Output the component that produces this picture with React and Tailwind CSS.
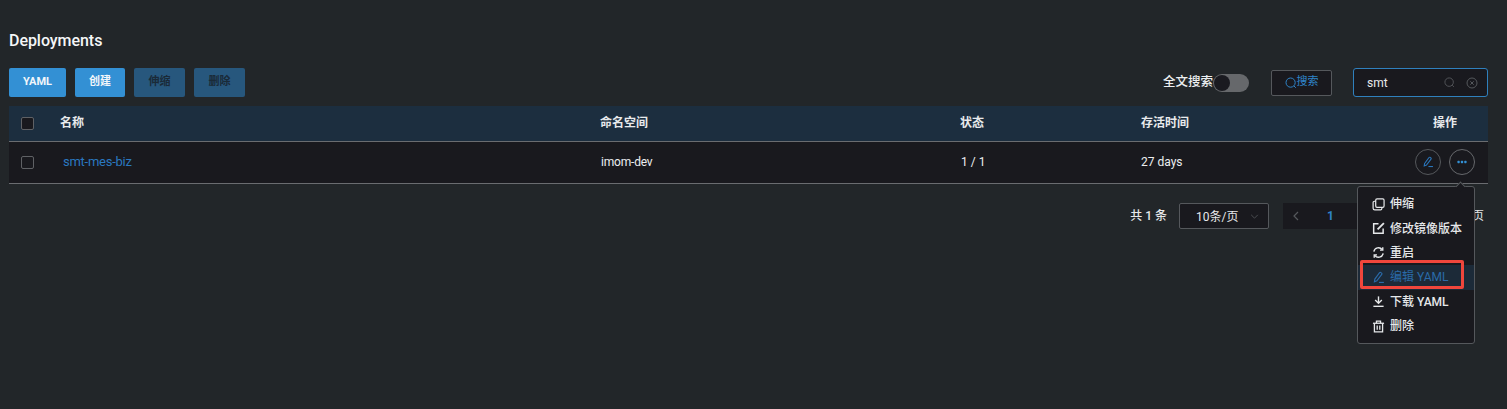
import React from "react";

const Pen = ({ className = "" }) => (
  <svg viewBox="0 0 14 14" fill="none" stroke="currentColor" strokeWidth="1.25" className={className}>
    <path d="M3 8.8 L8.2 1.8 a1 1 0 0 1 1.5 -0.1 l0.7 0.6 a1 1 0 0 1 0.1 1.4 L5.2 10.6 L2.6 11.6 Z" />
    <path d="M7.5 12.3 H12.8" />
  </svg>
);

const Copy = () => (
  <svg viewBox="0 0 14 14" fill="none" stroke="currentColor" strokeWidth="1.3" className="w-[13px] h-[13px]">
    <rect x="4" y="1" width="9" height="9" rx="1.4" />
    <path d="M4 3.5 H2.6 A1.4 1.4 0 0 0 1.2 4.9 V11 A1.8 1.8 0 0 0 3 12.8 H9.2 A1.4 1.4 0 0 0 10.6 11.4 V10" />
  </svg>
);
const EditBox = () => (
  <svg viewBox="0 0 14 14" fill="none" stroke="currentColor" strokeWidth="1.6" className="w-[13px] h-[13px]">
    <path d="M7 2 H1.8 V12.2 H12 V7" />
    <path d="M6 8 L12.8 1.2" strokeWidth="2" />
  </svg>
);
const Restart = () => (
  <svg viewBox="0 0 14 14" fill="none" stroke="currentColor" strokeWidth="1.5" className="w-[13px] h-[13px]">
    <path d="M2 6 A5 5 0 0 1 11 4" />
    <path d="M12 8 A5 5 0 0 1 3 10" />
    <path d="M11.6 1.4 V4.4 H8.6" />
    <path d="M2.4 12.6 V9.6 H5.4" />
  </svg>
);
const Download = () => (
  <svg viewBox="0 0 14 14" fill="none" stroke="currentColor" strokeWidth="1.5" className="w-[13px] h-[13px]">
    <path d="M7 1.5 V8.5" />
    <path d="M3.4 5.4 L7 9 L10.6 5.4" />
    <path d="M1.5 12.2 H12.5" />
  </svg>
);
const Trash = () => (
  <svg viewBox="0 0 14 14" fill="none" stroke="currentColor" strokeWidth="1.4" className="w-[13px] h-[13px]">
    <path d="M1 3.5 H13" />
    <path d="M4.8 3.5 V1.2 H9.2 V3.5" />
    <path d="M2.6 3.5 V12.8 H11.4 V3.5" />
    <path d="M5.6 6 V10.5 M8.4 6 V10.5" />
  </svg>
);
const Search = ({ className = "" }) => (
  <svg viewBox="0 0 12 12" fill="none" stroke="currentColor" strokeWidth="1" className={className}>
    <circle cx="5.6" cy="5.6" r="4.6" />
    <path d="M9 9 L10.8 10.8" />
  </svg>
);

const cjk = "font-['Roboto','Noto_Sans_CJK_SC',sans-serif]";

const MenuItem = ({ icon, label, active }) => (
  <div className={`h-[24.4px] flex items-center pl-[14px] gap-[5px] text-[12px] ${active ? "bg-[#1c2a38] text-[#2a6aa8] font-normal" : "text-[#e6e8ea]"}`}>
    <span className="w-[13px] h-[13px] flex items-center justify-center">{icon}</span>
    <span>{label}</span>
  </div>
);

const Checkbox = () => <span className="block w-[13px] h-[13px] border border-[#5f6165] rounded-[2px] bg-[#19191e]" />;

export default function App() {
  return (
    <div className={`relative w-[1507px] h-[409px] overflow-hidden bg-[#222629] text-white ${cjk}`}>
      <div className="pl-[9px] pr-[19px] pt-[31px]">
        <div className="text-[16px] leading-[20px] font-medium tracking-[-0.05px] text-[#f5f6f7]">Deployments</div>

        <div className="mt-[17px] h-[29px] flex items-center justify-between">
          <div className="flex gap-[9px] text-[11px] font-bold">
            <button className="w-[57px] h-[29px] rounded-[2px] bg-[#3390d4] text-[#f2f6fa]">YAML</button>
            <button className="w-[50px] h-[29px] rounded-[2px] bg-[#3390d4] text-[#f2f6fa]">创建</button>
            <button className="w-[51px] h-[29px] rounded-[2px] bg-[#27577d] text-[#1a2a38]">伸缩</button>
            <button className="w-[51px] h-[29px] rounded-[2px] bg-[#27577d] text-[#1a2a38]">删除</button>
          </div>
          <div className="flex items-center">
            <span className="text-[12.5px] text-[#eceef0] font-medium">全文搜索</span>
            <span className="relative block w-[36px] h-[18px] rounded-full bg-[#66686b]">
              <span className="absolute left-[1px] top-[1px] w-[16px] h-[16px] rounded-full bg-[#1a1a20]" />
            </span>
            <button className="ml-[22px] w-[61px] h-[26px] rounded-[2px] border border-[#55585c] bg-[#19191e] text-[#2f84c8] text-[11px] flex items-center justify-center">
              <Search className="w-[12px] h-[12px]" />
              <span>搜索</span>
            </button>
            <div className="ml-[21px] w-[135px] h-[29px] rounded-[3px] border border-[#2f80bd] bg-[#19191e] flex items-center pl-[13px] pr-[9px]">
              <span className="text-[12px] text-[#e8eaec] flex-1">smt</span>
              <Search className="w-[11px] h-[11px] text-[#55585c] mr-[11px]" />
              <svg viewBox="0 0 12 12" fill="none" stroke="#55585c" className="w-[12px] h-[12px]">
                <circle cx="6" cy="6" r="5" />
                <path d="M4.3 4.3 L7.7 7.7 M7.7 4.3 L4.3 7.7" />
              </svg>
            </div>
          </div>
        </div>

        <div className="mt-[9px] text-[12px]">
          <div className="h-[36px] pb-[1px] bg-[#1c2e3f] border-b border-[#6a6c70] grid grid-cols-[51px_540px_360px_166px_1fr] items-center font-bold text-[#e8eaec]">
            <div className="pl-[12px]"><Checkbox /></div>
            <div>名称</div>
            <div>命名空间</div>
            <div>状态</div>
            <div className="flex justify-between pl-[15px] pr-[31px]"><span>存活时间</span><span>操作</span></div>
          </div>
          <div className="h-[42px] pb-[1px] bg-[#19191e] border-b border-[#6a6c70] grid grid-cols-[52px_540px_360px_166px_1fr] items-center text-[#eceef0]">
            <div className="pl-[12px]"><Checkbox /></div>
            <div className="pl-[2px] text-[13px] tracking-[-0.25px] text-[#2a78c0]">smt-mes-biz</div>
            <div className="tracking-[-0.2px]">imom-dev</div>
            <div>1 / 1</div>
            <div className="flex justify-between items-center pr-[13px] pl-[14px]">
              <span>27 days</span>
              <span className="flex gap-[8px]">
                <span className="w-[26px] h-[26px] rounded-full border border-[#55585c] flex items-center justify-center text-[#2a76bb]">
                  <Pen className="w-[12px] h-[12px]" />
                </span>
                <span className="w-[26px] h-[26px] rounded-full border border-[#66686c] flex items-center justify-center text-[#3390d4]">
                  <svg viewBox="0 0 12 4" fill="currentColor" className="w-[10px] h-[4px]">
                    <rect x="0.5" y="0.6" width="2.8" height="2.8" rx="0.8" /><rect x="4.6" y="0.6" width="2.8" height="2.8" rx="0.8" /><rect x="8.7" y="0.6" width="2.8" height="2.8" rx="0.8" />
                  </svg>
                </span>
              </span>
            </div>
          </div>
        </div>

        <div className="mt-[19px] pr-[4px] flex items-center text-[12px] text-[#e6e8ea]">
          <div className="ml-auto flex items-center">
            <span className="font-medium">共 1 条</span>
            <span className="ml-[12px] w-[90px] h-[26px] rounded-[2px] border border-[#55585c] bg-[#19191e] flex items-center pl-[16px]">
              <span className="mt-[2px]">10条/页</span>
              <svg viewBox="0 0 10 6" fill="none" stroke="#55585c" className="ml-[12px] w-[9px] h-[5px]"><path d="M1 1 L5 5 L9 1" /></svg>
            </span>
            <span className="ml-[14px] w-[192px] h-[26px] bg-[#19191e] flex items-center pl-[10px]">
              <svg viewBox="0 0 6 10" fill="none" stroke="#55585c" strokeWidth="1.2" className="w-[6px] h-[10px]"><path d="M5 1 L1 5 L5 9" /></svg>
              <span className="ml-[28px] text-[#2f84c8] font-bold">1</span>
            </span>
            <span className="-ml-[3px] text-[#e6e8ea]">页</span>
          </div>
        </div>
      </div>

      {/* dropdown */}
      <div className="absolute left-[1357px] top-[186px] w-[118px] h-[158px] rounded-[3px] border border-[#55585c] bg-[#19191e] pt-[5px] font-medium">
        <span className="absolute left-[99px] -top-[4px] w-[7px] h-[7px] rotate-45 border-l border-t border-[#55585c] bg-[#19191e]" />
        <MenuItem icon={<Copy />} label="伸缩" />
        <MenuItem icon={<EditBox />} label="修改镜像版本" />
        <MenuItem icon={<Restart />} label="重启" />
        <MenuItem icon={<Pen className="w-[13px] h-[13px]" />} label="编辑 YAML" active />
        <MenuItem icon={<Download />} label="下载 YAML" />
        <MenuItem icon={<Trash />} label="删除" />
      </div>
      {/* annotation */}
      <div className="absolute left-[1360px] top-[260px] w-[104px] h-[29px] border-[3px] border-[#f0463c] rounded-[2px]" />
    </div>
  );
}
